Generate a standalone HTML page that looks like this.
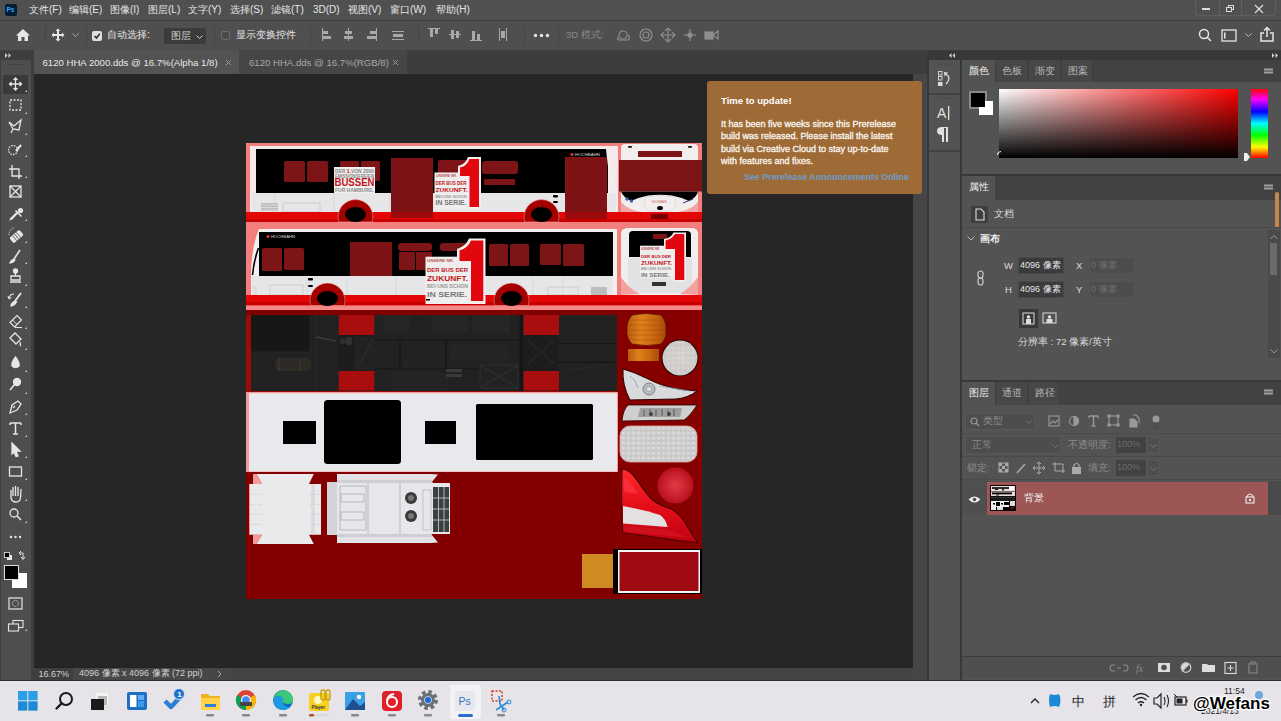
<!DOCTYPE html>
<html><head><meta charset="utf-8">
<style>
*{margin:0;padding:0;box-sizing:border-box}
html,body{width:1281px;height:721px;overflow:hidden;background:#262626;font-family:"Liberation Sans",sans-serif;position:relative}
.a{position:absolute}
.t{position:absolute;white-space:nowrap;line-height:1}
</style></head><body>
<!-- menu bar -->
<div class="a" style="left:0;top:0;width:1281px;height:20px;background:#505050"></div>
<div class="a" style="left:0;top:20px;width:1281px;height:1px;background:#3d3d3d"></div>
<!-- options bar -->
<div class="a" style="left:0;top:21px;width:1281px;height:29px;background:#4f4f4f"></div>
<!-- toolbar -->
<div class="a" style="left:0;top:50px;width:34px;height:631px;background:#3e3e3e"></div>
<div class="a" style="left:1px;top:60px;width:30px;height:621px;background:#4e4e4e"></div>
<!-- doc tab bar -->
<div class="a" style="left:34px;top:50px;width:893px;height:24px;background:#3d3d3d"></div>
<div class="a" style="left:34px;top:50px;width:205px;height:24px;background:#535353"></div>
<div class="a" style="left:239px;top:50px;width:168px;height:24px;background:#464646"></div>
<!-- doc area -->
<div class="a" style="left:34px;top:74px;width:879px;height:593px;background:#262626"></div>
<div class="a" style="left:913px;top:74px;width:14px;height:607px;background:#464646"></div>
<svg class="a" style="left:246px;top:143px" width="456" height="456" viewBox="246 143 456 456" font-family="Liberation Sans" font-weight="bold">
<defs>
<pattern id="grid" width="6" height="6" patternUnits="userSpaceOnUse"><rect width="6" height="6" fill="#242424"/><path d="M0 0H6M0 0V6" stroke="#1c1c1c" stroke-width="0.6"/></pattern>
<linearGradient id="orng" x1="0" x2="1" y1="0" y2="0"><stop offset="0" stop-color="#b85a0c"/><stop offset="0.35" stop-color="#e0801c"/><stop offset="0.7" stop-color="#c8680e"/><stop offset="1" stop-color="#a84c08"/></linearGradient>
<pattern id="noise" width="5" height="5" patternUnits="userSpaceOnUse"><rect width="5" height="5" fill="#d2d0d0"/><rect x="0.3" y="0.6" width="1.2" height="1" fill="#adabab"/><rect x="2.6" y="2.4" width="1.4" height="1.2" fill="#e8e8e8"/><rect x="3.2" y="0.2" width="1" height="1" fill="#b8b6b6"/><rect x="1" y="3.6" width="1" height="1" fill="#bdbbbb"/></pattern>
<radialGradient id="wcirc"><stop offset="0" stop-color="#dcdad7"/><stop offset="1" stop-color="#cbc8c4"/></radialGradient>
<radialGradient id="rcirc"><stop offset="0" stop-color="#e23a45"/><stop offset="1" stop-color="#b8101d"/></radialGradient>
<linearGradient id="tail" x1="0" x2="0" y1="0" y2="1"><stop offset="0" stop-color="#ff2a30"/><stop offset="0.45" stop-color="#e8101a"/><stop offset="1" stop-color="#c00010"/></linearGradient>
<linearGradient id="silver" x1="0" x2="0" y1="0" y2="1"><stop offset="0" stop-color="#e0e0e0"/><stop offset="0.5" stop-color="#8c8c8c"/><stop offset="1" stop-color="#d8d8d8"/></linearGradient>
</defs>
<!-- ===== BUS 1 section ===== -->
<rect x="246" y="143" width="456" height="87" fill="#f27e7e"/>
<rect x="250" y="146" width="368" height="67" fill="#f7e9e9"/>
<rect x="256" y="149" width="352" height="44" fill="#000"/>
<path d="M608 149 Q612 170 616 193 L612 193 Q608 172 606 149Z" fill="#f1eeee"/>
<rect x="252" y="193" width="364" height="19" fill="#e6e5e8"/>
<line x1="275" y1="193" x2="275" y2="212" stroke="#c8c8c8" stroke-width="0.5"/>
<line x1="334" y1="193" x2="334" y2="212" stroke="#c8c8c8" stroke-width="0.5"/>
<line x1="390" y1="193" x2="390" y2="212" stroke="#c8c8c8" stroke-width="0.5"/>
<rect x="261" y="203" width="17" height="8" fill="#bdbdbd"/>
<path d="M261 205H278M261 207.5H278M261 210H278" stroke="#e5e5e5" stroke-width="0.7"/>
<rect x="283" y="203" width="37" height="9" fill="none" stroke="#c8c8c8" stroke-width="0.8"/>
<!-- windows bus1 -->
<rect x="284" y="161" width="21" height="21" rx="1.5" fill="#7d1416"/>
<rect x="307" y="161" width="21" height="21" rx="1.5" fill="#7d1416"/>
<rect x="340" y="161" width="19" height="20" rx="1.5" fill="#7d1416"/>
<rect x="361" y="161" width="19" height="20" rx="1.5" fill="#7d1416"/>
<rect x="438" y="160" width="34" height="16" rx="2" fill="#7d1416"/>
<rect x="482" y="161" width="36" height="13" rx="3" fill="#7d1416"/>
<rect x="484" y="179" width="31" height="6" fill="#7d1416"/>
<!-- door bus1 -->
<rect x="391" y="158" width="42" height="60" fill="#7f1214"/>
<rect x="565" y="157" width="42" height="62" fill="#7f1214"/>
<!-- red band bus1 -->
<rect x="246" y="212" width="456" height="10" fill="#e30606"/>
<rect x="246" y="219" width="456" height="3" fill="#c80000"/>
<rect x="391" y="212" width="42" height="6" fill="#9d0a0c"/>
<rect x="565" y="212" width="42" height="7" fill="#9d0a0c"/>
<!-- wheels bus1 -->
<path d="M338.7 222 A17.5 17.5 0 1 1 372.3 222 Z" fill="#a50000" stroke="#f3b0b0" stroke-width="0.5"/>
<ellipse cx="355.5" cy="214.5" rx="10.5" ry="7.5" fill="#000"/>
<path d="M524.7 222 A17.5 17.5 0 1 1 558.3 222 Z" fill="#a50000" stroke="#f3b0b0" stroke-width="0.5"/>
<ellipse cx="541.5" cy="214.5" rx="10.5" ry="7.5" fill="#000"/>
<rect x="553" y="195" width="5" height="2.4" rx="1" fill="#000"/>
<rect x="553" y="201" width="5" height="2" rx="1" fill="#000"/>
<!-- signs bus1 -->
<rect x="334" y="167" width="41" height="26" fill="#f0efef"/>
<text x="335" y="172.7" font-size="4.8" fill="#888" textLength="39" lengthAdjust="spacingAndGlyphs">DER <tspan fill="#c00">1.</tspan>VON 2000</text>
<text x="335" y="177.5" font-size="4.5" fill="#888" textLength="39" lengthAdjust="spacingAndGlyphs">EMISSIONSFREIEN</text>
<text x="334.5" y="185.7" font-size="10" fill="#c3141a" textLength="40" lengthAdjust="spacingAndGlyphs">BUSSEN</text>
<text x="335" y="192" font-size="4.8" fill="#888" textLength="39" lengthAdjust="spacingAndGlyphs">FUR HAMBURG.</text>
<rect x="434.5" y="172.5" width="34" height="37" fill="#efeeee"/>
<path d="M458 166 Q466 164 468 157 H481 V209.5 H467 V178 H458 Z" fill="#f6eeee"/>
<path d="M460 167.5 Q467 166 469.5 159 H479 V207 H469.5 V176 H460 Z" fill="#e2060e"/>
<text x="436" y="177" font-size="3.4" fill="#b55">UNSERE NR.</text>
<text x="435.5" y="185" font-size="5.2" fill="#c4141a" textLength="31" lengthAdjust="spacingAndGlyphs">DER BUS DER</text>
<text x="435.5" y="192.3" font-size="6.2" fill="#c4141a" textLength="32" lengthAdjust="spacingAndGlyphs">ZUKUNFT.</text>
<text x="435.5" y="197.5" font-size="4.2" fill="#999" textLength="31" lengthAdjust="spacingAndGlyphs">BEI UNS SCHON</text>
<text x="435.5" y="204.5" font-size="6.4" fill="#777" textLength="31" lengthAdjust="spacingAndGlyphs">IN SERIE.</text>
<circle cx="572" cy="154.5" r="1.6" fill="#e33"/><text x="575" y="156" font-size="4" fill="#ddd" font-weight="normal" textLength="25" lengthAdjust="spacingAndGlyphs">HOCHBAHN</text>
<!-- front bus1 -->
<path d="M621 148 Q621 144 625 144 L694 144 Q698 144 698 148 L698 212 L621 212Z" fill="#f3eeee"/>
<rect x="628" y="146" width="4" height="1.8" rx="0.9" fill="#111"/><rect x="688" y="146" width="4" height="1.8" rx="0.9" fill="#111"/>
<rect x="638" y="151" width="44" height="6" fill="#7d1416"/>
<rect x="619" y="160" width="83" height="31.5" fill="#7d1416"/>
<path d="M621 191.5 H698 Q697 197 689 201 Q680 197 672 195.5 Q660 194 648 195.5 Q640 197 631 201 Q623 197 621 191.5Z" fill="#000"/>
<path d="M621 202 Q628 210 642 212 H621Z M698 202 Q691 210 677 212 H698Z" fill="#f2a3a3"/>
<path d="M645 197 Q660 194 675 197 Q678 205 672 211 H648 Q642 205 645 197Z" fill="none" stroke="#c8c4c4" stroke-width="0.4"/>
<circle cx="627" cy="199" r="1.7" fill="#3a5fb0"/><circle cx="631.5" cy="201" r="1.7" fill="#3a5fb0"/>
<text x="652" y="202.5" font-size="2.6" fill="#c55" font-weight="normal">HOCHBAHN</text>
<path d="M683 203 L693 199" stroke="#2a3f80" stroke-width="1"/>
<ellipse cx="660" cy="208" rx="3" ry="2" fill="#000"/>
<rect x="651" y="214" width="17" height="5" fill="#7a0000"/>
<!-- ===== BUS 2 section ===== -->
<rect x="246" y="229" width="456" height="81" fill="#f27e7e"/>
<path d="M259 229 L617 229 L617 295 L251 295 L251 272 Q252 245 259 229Z" fill="#f5f0f0"/>
<rect x="259" y="232" width="354" height="44" fill="#000"/>
<path d="M258.5 248 Q254 260 252.5 275" stroke="#000" stroke-width="1.6" fill="none"/>
<rect x="252" y="276" width="361" height="19" fill="#e6e5e8"/>
<path d="M252 288 H256 V295" stroke="#bbb" stroke-width="0.5" fill="none"/>
<line x1="307" y1="276" x2="307" y2="295" stroke="#c8c8c8" stroke-width="0.5"/>
<line x1="347" y1="276" x2="347" y2="295" stroke="#c8c8c8" stroke-width="0.5"/>
<line x1="396" y1="276" x2="396" y2="295" stroke="#c8c8c8" stroke-width="0.5"/>
<line x1="533" y1="276" x2="533" y2="295" stroke="#c8c8c8" stroke-width="0.5"/>
<line x1="563" y1="276" x2="563" y2="295" stroke="#c8c8c8" stroke-width="0.5"/>
<rect x="270" y="285" width="33" height="10" fill="none" stroke="#c8c8c8" stroke-width="0.8"/>
<rect x="548" y="287" width="30" height="8" fill="none" stroke="#c8c8c8" stroke-width="0.8"/>
<rect x="591" y="287" width="16" height="8" fill="#bdbdbd"/>
<!-- windows bus2 -->
<rect x="262" y="248" width="20" height="23" rx="1.5" fill="#7d1416"/>
<rect x="284" y="248" width="20" height="22" rx="1.5" fill="#7d1416"/>
<rect x="350" y="242" width="42" height="34" fill="#7f1214"/>
<rect x="398" y="243" width="34" height="8" rx="3" fill="#7d1416"/>
<rect x="399" y="252" width="16" height="18" rx="1" fill="#7d1416"/>
<rect x="416" y="252" width="16" height="18" rx="1" fill="#7d1416"/>
<rect x="440" y="243" width="30" height="8" rx="3" fill="#7d1416"/>
<rect x="489" y="244" width="19" height="22" rx="1.5" fill="#7d1416"/>
<rect x="510" y="244" width="19" height="22" rx="1.5" fill="#7d1416"/>
<rect x="540" y="244" width="21" height="21" rx="1.5" fill="#7d1416"/>
<rect x="563" y="244" width="21" height="22" rx="1.5" fill="#7d1416"/>
<circle cx="268" cy="236.5" r="1.6" fill="#e33"/><text x="271" y="238" font-size="3.6" fill="#ddd" font-weight="normal" textLength="24" lengthAdjust="spacingAndGlyphs">HOCHBAHN</text>
<rect x="308" y="278" width="5" height="2.4" rx="1" fill="#000"/>
<rect x="308" y="285" width="5" height="2" rx="1" fill="#000"/>
<!-- red band bus2 -->
<rect x="246" y="295" width="456" height="10.5" fill="#e30606"/>
<rect x="246" y="302" width="456" height="3.5" fill="#c80000"/>
<rect x="246" y="305.5" width="456" height="4.5" fill="#f38888"/>
<path d="M310.7 305.5 A17.5 17.5 0 1 1 344.3 305.5 Z" fill="#a50000" stroke="#f3b0b0" stroke-width="0.5"/>
<ellipse cx="327.5" cy="298.5" rx="10.5" ry="7.5" fill="#000"/>
<path d="M494.7 305.5 A17.5 17.5 0 1 1 528.3 305.5 Z" fill="#a50000" stroke="#f3b0b0" stroke-width="0.5"/>
<ellipse cx="511.5" cy="298.5" rx="10.5" ry="7.5" fill="#000"/>
<!-- sign bus2 -->
<rect x="425.5" y="256.7" width="46" height="47.3" fill="#efeeee"/>
<path d="M457 249 Q466 246 469 238.5 H485.5 V304 H469 V263 H457 Z" fill="#f6eeee"/>
<path d="M459.5 250.5 Q468 248 471 240.5 H483.3 V301 H471 V261 H459.5 Z" fill="#e2060e"/>
<text x="427" y="262" font-size="4" fill="#b55" textLength="27" lengthAdjust="spacingAndGlyphs">UNSERE NR.</text>
<text x="427" y="272.2" font-size="6" fill="#c4141a" textLength="41" lengthAdjust="spacingAndGlyphs">DER BUS DER</text>
<text x="427" y="281" font-size="7.6" fill="#c4141a" textLength="41" lengthAdjust="spacingAndGlyphs">ZUKUNFT.</text>
<text x="427" y="288" font-size="5" fill="#999" textLength="41" lengthAdjust="spacingAndGlyphs">BEI UNS SCHON</text>
<text x="427" y="296.7" font-size="7.6" fill="#777" textLength="40" lengthAdjust="spacingAndGlyphs">IN SERIE.</text>
<rect x="426" y="299" width="4" height="1.5" fill="#000"/>
<!-- rear bus2 -->
<path d="M621 234 Q621 228 628 228 L692 228 Q698 228 698 234 L698 295 L621 295Z" fill="#f2eeee"/>
<path d="M629 235 Q629 231 633 231 L687 231 Q691 231 691 235 L691 257 L629 257Z" fill="#000"/>
<path d="M628 258 L692 258 L692 283 Q690 292 680 293 L640 293 Q630 292 628 283Z" fill="#e2e1e4"/>
<path d="M621 277 Q628 288 640 294 L621 295Z" fill="#f2a0a0"/>
<path d="M698 277 Q690 288 680 294 L698 295Z" fill="#f2a0a0"/>
<rect x="653" y="234" width="14" height="5" fill="#7d1416"/>
<rect x="640" y="245.7" width="36" height="32.5" fill="#efeeee"/>
<path d="M664 239 Q671 238 673.5 232.5 H686 V281.5 H673.5 V250.5 H664 Z" fill="#f6eeee"/>
<path d="M665.6 240.5 Q672 239 675 234 H684.3 V280 H675 V249 H665.6 Z" fill="#e2060e"/>
<text x="641" y="250" font-size="3" fill="#b55" textLength="19" lengthAdjust="spacingAndGlyphs">UNSERE NR.</text>
<text x="641" y="258" font-size="4.2" fill="#c4141a" textLength="30" lengthAdjust="spacingAndGlyphs">DER BUS DER</text>
<text x="641" y="264.5" font-size="5.2" fill="#c4141a" textLength="31" lengthAdjust="spacingAndGlyphs">ZUKUNFT.</text>
<text x="641" y="269.5" font-size="3.6" fill="#999" textLength="30" lengthAdjust="spacingAndGlyphs">BEI UNS SCHON</text>
<text x="641" y="276.5" font-size="5.2" fill="#777" textLength="29" lengthAdjust="spacingAndGlyphs">IN SERIE.</text>
<rect x="652" y="282" width="14" height="4" fill="#333"/>
<!-- ===== SECTION 3 underbody ===== -->
<rect x="246" y="310" width="372" height="83" fill="#9a0b0b"/>
<rect x="246" y="310" width="372" height="5" fill="#7e0202"/>
<rect x="617" y="310" width="85" height="289" fill="#870000"/>
<rect x="251" y="315" width="366" height="76" fill="#1f1f1f"/>
<rect x="251" y="315" width="366" height="76" fill="url(#grid)" opacity="0.6"/>
<rect x="251" y="315" width="59" height="37" fill="#171717"/>
<path d="M251 352 H310 V315 M316 315 V391 M330 315 V391" stroke="#2c2c2c" stroke-width="0.7" fill="none"/>
<rect x="275" y="358" width="36" height="13" rx="5" fill="#2e2a26"/>
<path d="M279 358 V371 M300 358 V371" stroke="#3c3833" stroke-width="1"/>
<path d="M316 337 L336 341" stroke="#3a3a3a" stroke-width="1.5"/>
<rect x="338.7" y="335" width="35.6" height="36" fill="#1d1d1d"/>
<circle cx="343" cy="341" r="3" fill="#2f2f2f"/><rect x="346" y="337" width="6" height="8" rx="2" fill="#333"/>
<rect x="356" y="338" width="18" height="31" fill="#222" stroke="#2e2e2e" stroke-width="0.6"/>
<path d="M357 368 L373 339" stroke="#333" stroke-width="0.8"/>
<rect x="338.7" y="315" width="35.6" height="20" fill="#a80e0e"/>
<rect x="338.7" y="371" width="35.6" height="19.5" fill="#a80e0e"/>
<path d="M374 340 H519 M374 369 H519 M400 340 V369 M446 340 V369 M559 343.6 H616 M559 362.2 H616" stroke="#151515" stroke-width="1.2" fill="none"/>
<path d="M380 340 L395 323 M404 368 L430 343" stroke="#2e2e2e" stroke-width="0.8"/>
<rect x="384" y="316" width="25" height="15" fill="#262626" stroke="#2e2e2e" stroke-width="0.6"/>
<rect x="432" y="316" width="35" height="15" fill="#262626" stroke="#2e2e2e" stroke-width="0.6"/>
<rect x="473" y="316" width="36" height="15" fill="#262626" stroke="#2e2e2e" stroke-width="0.6"/>
<rect x="452" y="346" width="55" height="14" fill="#242424" stroke="#2e2e2e" stroke-width="0.6"/>
<rect x="392" y="374" width="55" height="16" fill="#242424" stroke="#2e2e2e" stroke-width="0.6"/>
<rect x="446" y="369" width="16" height="3" fill="#3a3a3a"/><rect x="446" y="374" width="16" height="3" fill="#3a3a3a"/>
<rect x="480" y="365" width="38" height="23" fill="#222" stroke="#333" stroke-width="0.8"/>
<path d="M481 366 L517 387 M517 366 L481 387" stroke="#383838" stroke-width="0.8"/>
<rect x="519.5" y="315" width="4" height="76" fill="#151515"/>
<rect x="523.5" y="335" width="35.5" height="36" fill="#1d1d1d"/>
<path d="M528 340 L540 352 L528 364 M554 340 L542 352 L554 364" stroke="#333" stroke-width="0.8" fill="none"/>
<rect x="523.5" y="315" width="35.5" height="20" fill="#a80e0e"/>
<rect x="523.5" y="371" width="35.5" height="19.5" fill="#a80e0e"/>
<path d="M570 370 L612 364" stroke="#333" stroke-width="0.5"/>
<!-- ===== SECTION 4 roof white ===== -->
<rect x="246" y="392" width="372" height="80.5" fill="#f39a9a"/>
<rect x="249" y="393.2" width="368" height="78.3" fill="#e9e8ec"/>
<rect x="283" y="421" width="33" height="23" fill="#000"/>
<rect x="324" y="400" width="77" height="64" rx="3.5" fill="#000"/>
<rect x="425" y="421" width="31" height="23" fill="#000"/>
<rect x="476" y="404" width="117" height="56" rx="1.5" fill="#000"/>
<!-- ===== SECTION 5 dark red ===== -->
<rect x="246" y="472" width="372" height="127" fill="#820000"/>
<path d="M253 474 H256.5 L262 484 H253Z M253 544 H256.5 L262 534.7 H253Z" fill="#f39a9a"/>
<path d="M256.5 474 H313.8 L309 484 H321 V534.7 H309 L313.8 544 H256.5 L262 534.7 H249.3 V484 H262 Z" fill="#eaeaec"/>
<path d="M250 495 Q256 493 262 495 M250 505 Q256 503 262 505 M250 515 Q256 513 262 515 M250 525 Q256 523 262 525 M309 495 Q315 493 321 495 M309 505 Q315 503 321 505 M309 515 Q315 513 321 515 M309 525 Q315 523 321 525" stroke="#cfcfd3" stroke-width="0.6" fill="none"/>
<path d="M313 484 V534.7" stroke="#d2d2d6" stroke-width="4" opacity="0.6"/>
<path d="M337 474 H431 L438 474.5 L431 483 H337Z" fill="#e3e2e6"/><path d="M337 480 H431 L433 483 H337Z" fill="#cfced3"/>
<path d="M337 543 H431 L438 542.5 L431 534 H337Z" fill="#e3e2e6"/><path d="M337 534 H431 L433 537 H337Z" fill="#cfced3"/>
<rect x="327" y="482" width="10" height="53" fill="#d4d3d7"/>
<rect x="337" y="483" width="113" height="51" fill="#e7e6ea"/>
<path d="M340 486 H366 V530 H340Z M368 483 V534 M400 483 V534" stroke="#9a9a9a" stroke-width="0.6" fill="none"/>
<rect x="341" y="494" width="23" height="8" fill="none" stroke="#9a9a9a" stroke-width="0.6"/>
<rect x="341" y="512" width="23" height="8" fill="none" stroke="#9a9a9a" stroke-width="0.6"/>
<circle cx="411" cy="498" r="6" fill="#3a3a3a"/><circle cx="411" cy="498" r="3" fill="#777"/>
<circle cx="411" cy="516" r="6" fill="#3a3a3a"/><circle cx="411" cy="516" r="3" fill="#777"/>
<rect x="423" y="490" width="8" height="40" fill="none" stroke="#aaa" stroke-width="0.6"/>
<rect x="433" y="487" width="16" height="45" fill="#3b3f42"/>
<path d="M433 498 H449 M433 509 H449 M433 520 H449 M438.5 487 V532 M444 487 V532" stroke="#cfcfd2" stroke-width="0.8"/>
<!-- right column lamps -->
<path d="M632 315 Q646.5 312 661 315 Q667 322 666 330 Q667 338 661 344 Q646.5 347 632 344 Q626 338 627 330 Q626 322 632 315Z" fill="url(#orng)" stroke="#3a0000" stroke-width="0.6"/>
<path d="M629 320 H664 M628 325 H665 M628 330 H666 M628 335 H665 M629 340 H664" stroke="#8a3a05" stroke-width="0.6" opacity="0.5"/>
<rect x="628" y="349" width="31" height="12" fill="url(#orng)"/>
<circle cx="680" cy="358" r="18.5" fill="#1a0000"/>
<circle cx="680" cy="358" r="17.5" fill="url(#wcirc)"/><circle cx="680" cy="358" r="17" fill="url(#noise)" opacity="0.45"/>
<path d="M623 369 Q634 372 646 378 Q668 390 697 391 Q688 398 676 399 L630 400 Q622 385 623 369Z" fill="#d8dadb" stroke="#2a0000" stroke-width="1"/>
<circle cx="649" cy="389" r="6" fill="#b8bcbe" stroke="#6a6f72" stroke-width="0.8"/><circle cx="649" cy="389" r="2.6" fill="#e0e2e4" stroke="#777" stroke-width="0.5"/><path d="M630 376 Q636 380 638 388 M660 386 Q672 388 690 391" stroke="#8aa0a8" stroke-width="0.8" fill="none"/>
<path d="M628 405 H697 Q690 416 684 420 L622 421 Q623 410 628 405Z" fill="#cfcfcf" stroke="#2a0000" stroke-width="0.8"/>
<path d="M640 408 H682 L680 417 H638Z" fill="#8a8a8a" opacity="0.7"/><path d="M644 410 V416 M650 409 V416 M656 410 V416 M662 409 V416 M668 410 V416 M674 409 V416" stroke="#555" stroke-width="1"/><circle cx="651" cy="414" r="2" fill="#444"/><circle cx="669" cy="414" r="2" fill="#444"/>
<rect x="620" y="426" width="77" height="36" rx="10" fill="#c8c6c6" stroke="#e8b0b0" stroke-width="0.8"/>
<rect x="621" y="427" width="75" height="34" rx="9" fill="url(#noise)"/>
<path d="M622 468.7 Q630 470 636 478.7 Q645 492 651 498.7 Q660 506 671 508.7 Q680 514 685 522.5 L697.5 542.5 Q680 541 657.5 537.5 L622.5 532.5 Q621 500 622 468.7Z" fill="url(#tail)" stroke="#4a0000" stroke-width="1.2"/>
<path d="M624 478 Q632 482 638 494 L624 492Z" fill="#ff4050" opacity="0.5"/>
<path d="M623 506 Q645 510 660 515 Q666 519 667.5 527 L623 523.5Z" fill="#e4e0e2"/>
<path d="M624 526 L668 530 L690 538 L624 532Z" fill="#d0101c"/>
<circle cx="675.5" cy="485.5" r="18" fill="url(#rcirc)"/>
<rect x="582" y="554" width="31" height="34" fill="#d08a22"/>
<rect x="613" y="549" width="89" height="45" fill="#000"/>
<rect x="618" y="550" width="82" height="43" fill="#f5f5f5"/>
<rect x="619.5" y="552" width="79" height="39" fill="#a00a12"/>
</svg>

<!-- status bar -->
<div class="a" style="left:34px;top:667px;width:879px;height:14px;background:#454545;border-top:1px solid #222"></div>
<!-- dock -->
<div class="a" style="left:927px;top:50px;width:354px;height:631px;background:#383838"></div>
<div class="a" style="left:929px;top:60px;width:31px;height:621px;background:#535353"></div>
<div class="a" style="left:962px;top:60px;width:319px;height:621px;background:#535353"></div>
<!-- ===== MENU BAR CONTENT ===== -->
<div class="a" style="left:5px;top:4px;width:12px;height:12px;background:#001e36;border-radius:2px"></div>
<div class="t" style="left:6.5px;top:6.5px;font-size:6.5px;font-weight:bold;color:#31a8ff">Ps</div>
<div class="t" style="left:29px;top:4.5px;font-size:10px;color:#e6e6e6">文件(F)</div>
<div class="t" style="left:69px;top:4.5px;font-size:10px;color:#e6e6e6">编辑(E)</div>
<div class="t" style="left:110px;top:4.5px;font-size:10px;color:#e6e6e6">图像(I)</div>
<div class="t" style="left:148px;top:4.5px;font-size:10px;color:#e6e6e6">图层(L)</div>
<div class="t" style="left:188px;top:4.5px;font-size:10px;color:#e6e6e6">文字(Y)</div>
<div class="t" style="left:230px;top:4.5px;font-size:10px;color:#e6e6e6">选择(S)</div>
<div class="t" style="left:271px;top:4.5px;font-size:10px;color:#e6e6e6">滤镜(T)</div>
<div class="t" style="left:313px;top:4.5px;font-size:10px;color:#e6e6e6">3D(D)</div>
<div class="t" style="left:348px;top:4.5px;font-size:10px;color:#e6e6e6">视图(V)</div>
<div class="t" style="left:390px;top:4.5px;font-size:10px;color:#e6e6e6">窗口(W)</div>
<div class="t" style="left:436px;top:4.5px;font-size:10px;color:#e6e6e6">帮助(H)</div>
<!-- window controls -->
<div class="a" style="left:1195px;top:0;width:81px;height:16px;border:1px solid #5f5f5f;border-top:none;border-radius:0 0 3px 3px"></div>
<div class="a" style="left:1219px;top:0;width:1px;height:16px;background:#5f5f5f"></div>
<div class="a" style="left:1241px;top:0;width:1px;height:16px;background:#5f5f5f"></div>
<div class="a" style="left:1202px;top:8px;width:8px;height:2px;background:#ddd"></div>
<div class="a" style="left:1228px;top:5px;width:6px;height:5px;border:1px solid #ddd"></div>
<div class="a" style="left:1226px;top:7px;width:6px;height:5px;border:1px solid #ddd;background:#535353"></div>
<svg class="a" style="left:1254px;top:4px" width="10" height="10"><path d="M1 1L9 9M9 1L1 9" stroke="#e0e0e0" stroke-width="1.2"/></svg>
<!-- ===== OPTIONS BAR CONTENT ===== -->
<svg class="a" style="left:15px;top:28px" width="16" height="14" viewBox="0 0 16 14"><path d="M8 1L1 7.5H3V13H6.5V9H9.5V13H13V7.5H15Z" fill="#e6e6e6"/></svg>
<div class="a" style="left:45px;top:27px;width:1px;height:17px;background:#444"></div>
<svg class="a" style="left:51px;top:28px" width="14" height="14" viewBox="0 0 14 14"><path d="M7 0.5L9.5 3H8V6H11V4.5L13.5 7L11 9.5V8H8V11H9.5L7 13.5L4.5 11H6V8H3V9.5L0.5 7L3 4.5V6H6V3H4.5Z" fill="#e6e6e6"/></svg>
<svg class="a" style="left:72px;top:33px" width="7" height="5"><path d="M0.5 0.5L3.5 3.5L6.5 0.5" stroke="#aaa" fill="none"/></svg>
<div class="a" style="left:86px;top:27px;width:1px;height:17px;background:#444"></div>
<div class="a" style="left:92px;top:31px;width:10px;height:10px;background:#e0e0e0;border-radius:2px"></div>
<svg class="a" style="left:93px;top:32px" width="8" height="8"><path d="M1.5 4L3.5 6L6.8 1.8" stroke="#333" stroke-width="1.6" fill="none"/></svg>
<div class="t" style="left:107px;top:30px;font-size:10px;color:#e6e6e6">自动选择:</div>
<div class="a" style="left:164px;top:28px;width:42px;height:16px;background:#3b3b3b;border-radius:2px"></div>
<div class="t" style="left:171px;top:31px;font-size:10px;color:#d0d0d0">图层</div>
<svg class="a" style="left:196px;top:35px" width="7" height="5"><path d="M0.5 0.5L3.5 3.5L6.5 0.5" stroke="#ccc" fill="none"/></svg>
<div class="a" style="left:214px;top:27px;width:1px;height:17px;background:#444"></div>
<div class="a" style="left:221px;top:31px;width:9px;height:9px;border:1px solid #6a6a6a;border-radius:2px;background:#4a4a4a"></div>
<div class="t" style="left:236px;top:30px;font-size:10px;color:#e6e6e6">显示变换控件</div>
<div class="a" style="left:310px;top:27px;width:1px;height:17px;background:#444"></div>
<svg class="a" style="left:320px;top:27px" width="200" height="16" fill="#a9a9a9">
 <rect x="2" y="1" width="1" height="13"/><rect x="3" y="4" width="5" height="3"/><rect x="3" y="9" width="8" height="3"/>
 <rect x="28" y="1" width="1" height="13"/><rect x="25" y="4" width="7" height="3"/><rect x="24" y="9" width="9" height="3"/>
 <rect x="56" y="1" width="1" height="13"/><rect x="50" y="4" width="6" height="3"/><rect x="47" y="9" width="9" height="3"/>
 <rect x="72" y="4" width="12" height="1"/><rect x="73" y="7" width="10" height="3"/><rect x="72" y="12" width="12" height="1"/>
</svg>
<div class="a" style="left:418px;top:27px;width:1px;height:17px;background:#444"></div>
<svg class="a" style="left:426px;top:27px" width="90" height="16" fill="#a9a9a9">
 <rect x="2" y="1" width="12" height="1"/><rect x="4" y="2" width="3" height="8"/><rect x="9" y="2" width="3" height="5"/>
 <rect x="23" y="7" width="12" height="1"/><rect x="25" y="3" width="3" height="9"/><rect x="30" y="4" width="3" height="7"/>
 <rect x="44" y="13" width="12" height="1"/><rect x="46" y="4" width="3" height="9"/><rect x="51" y="7" width="3" height="6"/>
 <rect x="73" y="1" width="1" height="13"/><rect x="80" y="1" width="1" height="13"/><rect x="75" y="4" width="4" height="7"/>
</svg>
<div class="a" style="left:524px;top:27px;width:1px;height:17px;background:#444"></div>
<svg class="a" style="left:533px;top:33px" width="18" height="5" fill="#e6e6e6"><circle cx="2.5" cy="2.5" r="1.7"/><circle cx="8.5" cy="2.5" r="1.7"/><circle cx="14.5" cy="2.5" r="1.7"/></svg>
<div class="a" style="left:558px;top:27px;width:1px;height:17px;background:#444"></div>
<div class="t" style="left:566px;top:30px;font-size:9.5px;color:#8a8a8a">3D 模式:</div>
<svg class="a" style="left:615px;top:26px" width="105" height="18" fill="none" stroke="#8f8f8f" stroke-width="1.2">
 <circle cx="8" cy="9" r="4"/><path d="M3 11 Q1 14 6 14 L13 14 Q16 12 13 9"/>
 <circle cx="31" cy="9" r="6"/><circle cx="31" cy="9" r="3"/>
 <path d="M53 2 V16 M46 9 H60" /><path d="M50 5 L53 2 L56 5 M50 13 L53 16 L56 13 M49 6 L46 9 L49 12 M57 6 L60 9 L57 12"/>
 <path d="M75 3 V15 M69 9 H81"/><circle cx="75" cy="9" r="2" fill="#8f8f8f"/>
 <rect x="90" y="6" width="8" height="7" fill="#8f8f8f"/><path d="M98 9 L103 5 V13 Z"/>
</svg>
<!-- right icons options bar -->
<svg class="a" style="left:1198px;top:28px" width="14" height="14" fill="none" stroke="#e6e6e6" stroke-width="1.5"><circle cx="6" cy="6" r="4.5"/><path d="M9.2 9.2L13 13"/></svg>
<svg class="a" style="left:1221px;top:29px" width="16" height="13" fill="none" stroke="#e6e6e6" stroke-width="1.3"><rect x="1" y="1" width="14" height="11"/><rect x="3" y="3.5" width="1.5" height="6" fill="#e6e6e6" stroke="none"/></svg>
<svg class="a" style="left:1245px;top:33px" width="7" height="5"><path d="M0.5 0.5L3.5 3.5L6.5 0.5" stroke="#bbb" fill="none"/></svg>
<svg class="a" style="left:1259px;top:26px" width="16" height="16" fill="none" stroke="#e6e6e6" stroke-width="1.5"><path d="M5 7H2V15H14V7H11"/><path d="M8 11V1.5M5 4.5L8 1.5L11 4.5"/></svg>
<!-- ===== TAB TEXT ===== -->
<div class="t" style="left:42.5px;top:58px;font-size:9.6px;color:#e8e8e8">6120 HHA 2000.dds @ 16.7%(Alpha 1/8)</div>
<svg class="a" style="left:225px;top:59px" width="7" height="7"><path d="M1 1L6 6M6 1L1 6" stroke="#9a9a9a" stroke-width="1"/></svg>
<div class="t" style="left:249px;top:58px;font-size:9.6px;color:#a8a8a8">6120 HHA.dds @ 16.7%(RGB/8)</div>
<svg class="a" style="left:392px;top:59px" width="7" height="7"><path d="M1 1L6 6M6 1L1 6" stroke="#9a9a9a" stroke-width="1"/></svg>
<!-- ===== STATUS BAR ===== -->
<div class="a" style="left:34px;top:668px;width:39px;height:12px;background:#3e3e3e"></div>
<div class="t" style="left:38.5px;top:669.5px;font-size:9px;color:#cfcfcf">16.67%</div>
<div class="a" style="left:73px;top:668px;width:152px;height:12px;background:#474747"></div>
<div class="t" style="left:79px;top:669px;font-size:9px;color:#cfcfcf">4096 像素 x 4096 像素 (72 ppi)</div>
<svg class="a" style="left:217px;top:670px" width="5" height="8"><path d="M1 1L4 4L1 7" stroke="#aaa" fill="none"/></svg>

<!-- ===== TOOLBAR ===== -->
<svg class="a" style="left:5px;top:53px" width="8" height="5" fill="#cfcfcf"><path d="M0 0L2.5 2.5L0 5Z M3.5 0L6 2.5L3.5 5Z"/></svg>
<svg class="a" style="left:8px;top:63px" width="18" height="3"><path d="M0 1.5H18" stroke="#3a3a3a" stroke-dasharray="1 1"/></svg>
<div class="a" style="left:3px;top:75px;width:25px;height:19px;background:#3a3a3a;border-radius:1px"></div>
<svg class="a" style="left:0;top:70px" width="34" height="580" fill="none" stroke="#e6e6e6" stroke-width="1.3">
 <!-- move y84 -->
 <path d="M15.5 78V90M9.5 84H21.5M13.5 80L15.5 78L17.5 80M13.5 88L15.5 90L17.5 88M11.5 82L9.5 84L11.5 86M19.5 82L21.5 84L19.5 86" transform="translate(0,-70)"/>
 <!-- marquee y106 -->
 <rect x="10" y="30" width="11" height="10" stroke-dasharray="2 1.5"/>
 <!-- lasso y127 -->
 <path d="M9 52 L14 56 L21 50 L19 60 L13 59 Z M13 59 L11 63"/>
 <!-- quick select y149 -->
 <circle cx="13" cy="80" r="4.5" stroke-dasharray="1.5 1.2"/><path d="M16 81 L21 75" stroke-width="2"/>
 <!-- crop y170 -->
 <path d="M12 95V106H22M9 99H19V109"/>
 <!-- frame y192 -->
 <rect x="10" y="116" width="11" height="11"/><path d="M10 116L21 127M21 116L10 127"/>
 <!-- eyedropper y213 -->
 <path d="M10.5 149.5 L17.5 142.5" stroke-width="2.4"/><path d="M15.5 140.5 L21.5 146.5" stroke-width="1.6"/><circle cx="20.5" cy="140.5" r="2.6" fill="#e6e6e6" stroke="none"/><path d="M9.5 150.5 L11 149" stroke-width="1"/>
 <!-- healing y235 -->
 <g transform="rotate(-40 16.5 166.5)"><rect x="10" y="163" width="13" height="7" rx="1.5" fill="#e6e6e6" stroke="none"/><path d="M14 163V170M16.5 163V170M19 163V170" stroke="#4e4e4e" stroke-width="0.8"/></g><path d="M9 165 Q9 159 14 158" stroke-dasharray="1 1" stroke-width="1"/>
 <!-- brush y256 -->
 <path d="M20 180 L14 189" stroke-width="1.6"/><path d="M14 189 Q10 191 10 193 Q13 193 15 190Z" fill="#e6e6e6"/>
 <!-- stamp y278 -->
 <path d="M15.5 200V206M11 206H20V210H11ZM10 212H21" /><circle cx="15.5" cy="201" r="2" fill="#e6e6e6"/>
 <!-- history y300 -->
 <path d="M21 223 L15 231" stroke-width="1.8"/><path d="M15 231 Q11 233 11 236 Q14 236 16.5 232Z" fill="#e6e6e6"/><path d="M9 228 Q10 224 14 224" stroke-width="1.1"/><path d="M8 226 L9 229 L11.5 227.5" stroke-width="1"/>
 <!-- eraser y321 -->
 <path d="M10 252.5 L17 245.5 L21.5 250 L14.5 257Z" stroke-width="1.2"/><path d="M12.5 250 L17 254.5" stroke-width="1"/><path d="M15 257.5H22" stroke-width="1.1"/>
 <!-- bucket y342 -->
 <path d="M10 268 L15 263 L21 269 L16 274Z"/><path d="M20 272 Q21 275 20 276" />
 <!-- blur y364 -->
 <path d="M15.5 287 Q11 293 12 296 Q15.5 299 19 296 Q20 293 15.5 287Z" fill="#e6e6e6"/>
 <!-- dodge y386 -->
 <circle cx="17" cy="312" r="3.5" fill="#e6e6e6"/><path d="M14.5 314.5 L10 320" stroke-width="1.6"/>
 <!-- pen y407 -->
 <path d="M10 343 L12 335 L18 331 L21 334 L17 340 Z M13 338 L15 336"/>
 <!-- type y429 -->
 <path d="M10 353H21M15.5 353V364M13 364H18M10 353V355M21 353V355" stroke-width="1.5"/>
 <!-- path select y450 -->
 <path d="M12 373 L20 381 L16 381 L18 386 L16 386.5 L14 382 L12 384Z" fill="#e6e6e6"/>
 <!-- rect y472 -->
 <rect x="9.5" y="397" width="12" height="9"/>
 <!-- hand y493 -->
 <path d="M11 420 L11 428 Q12 432 16 432 Q20 432 20.5 428 L21 419 M13 426V417M15.5 426V416M18 426V417" stroke-width="1.3"/>
 <!-- zoom y515 -->
 <circle cx="14" cy="443" r="4"/><path d="M17 446 L21 450" stroke-width="1.6"/>
</svg>
<svg class="a" style="left:0;top:0" width="34" height="681" fill="#e6e6e6">
 <circle cx="11" cy="537" r="1.2"/><circle cx="15.5" cy="537" r="1.2"/><circle cx="20" cy="537" r="1.2"/>
 <rect x="7" y="555" width="5" height="5" fill="#e6e6e6"/><rect x="4.5" y="552.5" width="5" height="5" fill="#000" stroke="#e6e6e6" stroke-width="0.8"/>
 <path d="M19 553 H23 V559 M21 557 L23 559.5 L25 557 M21 551 L19 553 L21 555" fill="none" stroke="#e6e6e6" stroke-width="1"/>
 <rect x="12" y="573" width="15" height="15" fill="#fff"/>
 <rect x="4.5" y="565.5" width="14" height="14" fill="#000" stroke="#dcdcdc" stroke-width="1"/>
 <rect x="9" y="598" width="13" height="11" fill="none" stroke="#e6e6e6" stroke-width="1.2"/><circle cx="15.5" cy="603.5" r="3" fill="none" stroke="#e6e6e6" stroke-dasharray="1 1"/>
 <rect x="13" y="620.5" width="10" height="7" fill="none" stroke="#e6e6e6" stroke-width="1.1"/><rect x="8.5" y="624" width="10" height="7" fill="#4e4e4e" stroke="#e6e6e6" stroke-width="1.1"/>
</svg>
<svg class="a" style="left:0;top:0" width="34" height="681" fill="#cfcfcf">
 <path d="M25 92h2v-2z M25 114h2v-2z M25 135h2v-2z M25 157h2v-2z M25 178h2v-2z M25 221h2v-2z M25 243h2v-2z M25 264h2v-2z M25 286h2v-2z M25 308h2v-2z M25 329h2v-2z M25 350h2v-2z M25 372h2v-2z M25 394h2v-2z M25 415h2v-2z M25 437h2v-2z M25 458h2v-2z M25 480h2v-2z M25 501h2v-2z M25 523h2v-2z M25 631h2v-2z"/>
</svg>
<!-- ===== DOCK ICON COLUMN ===== -->
<svg class="a" style="left:949px;top:53px" width="8" height="5" fill="#cfcfcf"><path d="M2.5 0L0 2.5L2.5 5Z M6 0L3.5 2.5L6 5Z"/></svg>
<svg class="a" style="left:1272px;top:53px" width="8" height="5" fill="#cfcfcf"><path d="M0 0L2.5 2.5L0 5Z M3.5 0L6 2.5L3.5 5Z"/></svg>
<div class="a" style="left:929px;top:60px;width:31px;height:33px;background:#535353"></div>
<div class="a" style="left:929px;top:93px;width:31px;height:1.5px;background:#424242"></div><div class="a" style="left:929px;top:150px;width:31px;height:1.5px;background:#424242"></div>
<svg class="a" style="left:929px;top:60px" width="31" height="95">
 <path d="M9 4H22M9 38H22" stroke="#3e3e3e" stroke-dasharray="1 1"/>
 <rect x="9.5" y="11.5" width="3.5" height="3.5" fill="none" stroke="#ddd" stroke-width="0.9"/><rect x="9.5" y="16.5" width="3.5" height="3.5" fill="none" stroke="#ddd" stroke-width="0.9"/><rect x="9" y="22" width="4.5" height="4" fill="#ddd"/>
 <path d="M15 12 L19 12.5 L15.5 16.5Z" fill="#ddd"/><path d="M17 14 Q23 18 17 24" fill="none" stroke="#ddd" stroke-width="1.3"/>
 <text x="8" y="58" font-size="14" fill="#e0e0e0" font-family="Liberation Sans">A</text><rect x="19" y="46" width="1.3" height="14" fill="#ddd"/>
 <path d="M13 67 Q8 67 8 71 Q8 75 13 75 V82 H15 V68 H17 V82 H19 V67Z" fill="#e0e0e0"/>
</svg>
<!-- ===== COLOR PANEL ===== -->
<div class="a" style="left:962px;top:60px;width:319px;height:22px;background:#424242"></div>
<div class="a" style="left:962px;top:60px;width:33px;height:22px;background:#535353"></div>
<div class="a" style="left:995px;top:60px;width:32px;height:22px;background:#474747;border-left:1px solid #3d3d3d"></div>
<div class="a" style="left:1028px;top:60px;width:32px;height:22px;background:#474747;border-left:1px solid #3d3d3d"></div>
<div class="a" style="left:1061px;top:60px;width:32px;height:22px;background:#474747;border-left:1px solid #3d3d3d;border-right:1px solid #3d3d3d"></div>
<div class="t" style="left:969px;top:66px;font-size:9.5px;color:#f0f0f0">颜色</div>
<div class="t" style="left:1002px;top:66px;font-size:9.5px;color:#b8b8b8">色板</div>
<div class="t" style="left:1035px;top:66px;font-size:9.5px;color:#b8b8b8">渐变</div>
<div class="t" style="left:1068px;top:66px;font-size:9.5px;color:#b8b8b8">图案</div>
<svg class="a" style="left:1264px;top:68px" width="9" height="6" fill="#a0a0a0"><rect y="0.5" width="9" height="2"/><rect y="3.5" width="9" height="2"/></svg>
<div class="a" style="left:969px;top:91px;width:18px;height:18px;background:#888"></div>
<div class="a" style="left:979px;top:101px;width:14px;height:14px;background:#fff"></div>
<div class="a" style="left:971px;top:93px;width:14px;height:14px;background:#000"></div>
<div class="a" style="left:999px;top:89px;width:239px;height:69px;background:linear-gradient(to bottom,rgba(0,0,0,0),#000),linear-gradient(to right,#fff,#f00)"></div>
<div class="a" style="left:997px;top:151px;width:8px;height:8px;border:1px solid #fff;border-radius:50%;clip-path:inset(0 50% 50% 0)"></div>
<div class="a" style="left:1251px;top:89px;width:17px;height:69px;background:linear-gradient(to bottom,#f00,#f0f 15%,#00f 33%,#0ff 50%,#0f0 67%,#ff0 84%,#f00)"></div>
<svg class="a" style="left:1244px;top:153px" width="6" height="8"><path d="M0 0H3L6 4L3 8H0Z" fill="#eee"/></svg>
<!-- ===== PROPERTIES PANEL ===== -->
<div class="a" style="left:962px;top:174px;width:319px;height:2px;background:#383838"></div>
<div class="a" style="left:962px;top:176px;width:319px;height:24px;background:#424242"></div>
<div class="a" style="left:962px;top:176px;width:33px;height:24px;background:#535353"></div>
<div class="t" style="left:969px;top:182px;font-size:9.5px;color:#f0f0f0">属性</div>
<svg class="a" style="left:1264px;top:184px" width="9" height="6" fill="#a0a0a0"><rect y="0.5" width="9" height="2"/><rect y="3.5" width="9" height="2"/></svg>
<div class="a" style="left:1275px;top:192px;width:4px;height:36px;background:#c8874a;border-radius:2px"></div>
<div class="a" style="left:971px;top:206px;width:17px;height:17px;background:#3e3e3e"></div>
<svg class="a" style="left:975px;top:208px" width="10" height="13"><path d="M1 1H6L9 4V12H1Z" fill="none" stroke="#ddd" stroke-width="1.1"/></svg>
<div class="t" style="left:994px;top:209px;font-size:9.5px;color:#dcdcdc">文档</div>
<div class="a" style="left:962px;top:227px;width:319px;height:1px;background:#494949"></div>
<svg class="a" style="left:967px;top:236px" width="8" height="5"><path d="M0.5 0.5L4 4L7.5 0.5" stroke="#bbb" fill="none"/></svg>
<div class="t" style="left:980px;top:234px;font-size:9.5px;font-weight:bold;color:#f0f0f0">画布</div>
<div class="t" style="left:1004px;top:261px;font-size:9.5px;color:#dcdcdc">W</div>
<div class="a" style="left:1018px;top:257px;width:46px;height:17px;background:#3b3b3b;border:1px solid #4a4a4a"></div>
<div class="t" style="left:1020px;top:261px;font-size:9px;color:#e6e6e6">4096 像素</div>
<div class="t" style="left:1076px;top:261px;font-size:9.5px;color:#dcdcdc">X</div>
<div class="a" style="left:1089px;top:257px;width:46px;height:17px;background:#4d4d4d;border:1px solid #555"></div>
<div class="t" style="left:1091px;top:261px;font-size:9px;color:#6e6e6e">0 像素</div>
<div class="t" style="left:1005px;top:285px;font-size:9.5px;color:#dcdcdc">H</div>
<div class="a" style="left:1018px;top:281px;width:46px;height:17px;background:#3b3b3b;border:1px solid #4a4a4a"></div>
<div class="t" style="left:1020px;top:285px;font-size:9px;color:#e6e6e6">4096 像素</div>
<div class="t" style="left:1076px;top:285px;font-size:9.5px;color:#dcdcdc">Y</div>
<div class="a" style="left:1089px;top:281px;width:46px;height:17px;background:#4d4d4d;border:1px solid #555"></div>
<div class="t" style="left:1091px;top:285px;font-size:9px;color:#6e6e6e">0 像素</div>
<svg class="a" style="left:976px;top:270px" width="10" height="16" fill="none" stroke="#ccc" stroke-width="1.2"><rect x="2" y="1" width="5" height="7" rx="2.5"/><rect x="2" y="8" width="5" height="7" rx="2.5"/></svg>
<div class="a" style="left:1019px;top:309px;width:19px;height:19px;background:#383838"></div>
<svg class="a" style="left:1022px;top:312px" width="13" height="13"><rect x="1" y="1" width="11" height="11" fill="none" stroke="#ddd"/><circle cx="6.5" cy="5" r="1.8" fill="#ddd"/><rect x="4" y="7" width="5" height="5" fill="#ddd"/></svg>
<svg class="a" style="left:1042px;top:312px" width="15" height="13"><rect x="1" y="1" width="13" height="10" fill="none" stroke="#ddd"/><circle cx="7.5" cy="5" r="1.8" fill="#ddd"/><rect x="4.5" y="7" width="6" height="4" fill="#ddd"/></svg>
<div class="t" style="left:1018px;top:337px;font-size:9.5px;color:#dcdcdc">分辨率 : 72 像素/英寸</div>
<div class="a" style="left:1268px;top:230px;width:12px;height:128px;background:#4a4a4a"></div>
<div class="a" style="left:1270px;top:243px;width:7px;height:32px;background:#6a6a6a"></div>
<svg class="a" style="left:1270px;top:235px" width="8" height="5"><path d="M0.5 4L4 0.5L7.5 4" stroke="#999" fill="none"/></svg>
<svg class="a" style="left:1270px;top:349px" width="8" height="5"><path d="M0.5 0.5L4 4L7.5 0.5" stroke="#999" fill="none"/></svg>
<!-- ===== LAYERS PANEL ===== -->
<div class="a" style="left:962px;top:380px;width:319px;height:2px;background:#383838"></div>
<div class="a" style="left:962px;top:382px;width:319px;height:23px;background:#424242"></div>
<div class="a" style="left:962px;top:382px;width:33px;height:23px;background:#535353"></div>
<div class="a" style="left:995px;top:382px;width:32px;height:23px;background:#474747;border-left:1px solid #3d3d3d"></div>
<div class="a" style="left:1028px;top:382px;width:32px;height:23px;background:#474747;border-left:1px solid #3d3d3d;border-right:1px solid #3d3d3d"></div>
<div class="t" style="left:969px;top:388px;font-size:9.5px;color:#f0f0f0">图层</div>
<div class="t" style="left:1002px;top:388px;font-size:9.5px;color:#b8b8b8">通道</div>
<div class="t" style="left:1035px;top:388px;font-size:9.5px;color:#b8b8b8">路径</div>
<svg class="a" style="left:1264px;top:389px" width="9" height="6" fill="#a0a0a0"><rect y="0.5" width="9" height="2"/><rect y="3.5" width="9" height="2"/></svg>
<div class="a" style="left:965px;top:413px;width:70px;height:17px;background:#4d4d4d;border:1px solid #575757"></div>
<svg class="a" style="left:970px;top:417px" width="10" height="10" fill="none" stroke="#9a9a9a" stroke-width="1.2"><circle cx="4" cy="4" r="3"/><path d="M6 6L9 9"/></svg>
<div class="t" style="left:983px;top:416px;font-size:9.5px;color:#8c8c8c">类型</div>
<svg class="a" style="left:1025px;top:420px" width="7" height="5"><path d="M0.5 0.5L3.5 3.5L6.5 0.5" stroke="#777" fill="none"/></svg>
<svg class="a" style="left:1045px;top:412px" width="120" height="20" fill="none" stroke="#999" stroke-width="1.1">
 <rect x="4" y="4" width="10" height="10"/><path d="M5 12L8 9L10 11L13 8" />
 <circle cx="29" cy="9" r="4.5"/><path d="M29 4.5A4.5 4.5 0 0 1 29 13.5Z" fill="#999"/>
 <path d="M44 4H53M48.5 4V14M46.5 14H50.5M44 4V6M53 4V6" stroke-width="1.4"/>
 <rect x="64" y="4" width="9" height="9"/><rect x="63" y="3" width="2" height="2" fill="#999"/><rect x="72" y="3" width="2" height="2" fill="#999"/><rect x="63" y="12" width="2" height="2" fill="#999"/><rect x="72" y="12" width="2" height="2" fill="#999"/>
 <path d="M85 7H89L92 10V15H85Z" fill="#999"/><path d="M88 3H91L94 6V11"/>
 <circle cx="111" cy="7" r="3.5" fill="#999" stroke="none"/><rect x="108" y="11" width="6" height="7" rx="3" fill="#4d4d4d" stroke="none"/>
</svg>
<div class="a" style="left:962px;top:433px;width:319px;height:1px;background:#4a4a4a"></div>
<div class="a" style="left:965px;top:436px;width:96px;height:18px;background:#4d4d4d;border:1px solid #575757"></div>
<div class="t" style="left:972px;top:440px;font-size:9.5px;color:#8c8c8c">正常</div>
<svg class="a" style="left:1052px;top:444px" width="7" height="5"><path d="M0.5 0.5L3.5 3.5L6.5 0.5" stroke="#777" fill="none"/></svg>
<div class="t" style="left:1068px;top:440px;font-size:9.5px;color:#8c8c8c">不透明度:</div>
<div class="a" style="left:1116px;top:437px;width:30px;height:16px;background:#424242"></div>
<div class="t" style="left:1117px;top:440px;font-size:9px;color:#6c6c6c">100%</div>
<div class="a" style="left:1147px;top:437px;width:12px;height:16px;background:#4d4d4d;border:1px solid #575757"></div><svg class="a" style="left:1150px;top:444px" width="7" height="5"><path d="M0.5 0.5L3.5 3.5L6.5 0.5" stroke="#777" fill="none"/></svg>
<div class="a" style="left:962px;top:456px;width:319px;height:1px;background:#4a4a4a"></div>
<div class="t" style="left:967px;top:463px;font-size:9.5px;color:#8c8c8c">锁定:</div>
<svg class="a" style="left:995px;top:459px" width="90" height="18">
 <rect x="4" y="4" width="9" height="9" fill="none" stroke="#aaa"/><rect x="4" y="4" width="3" height="3" fill="#aaa"/><rect x="10" y="4" width="3" height="3" fill="#aaa"/><rect x="7" y="7" width="3" height="3" fill="#aaa"/><rect x="4" y="10" width="3" height="3" fill="#aaa"/><rect x="10" y="10" width="3" height="3" fill="#aaa"/>
 <path d="M22 14 L30 5" stroke="#aaa" stroke-width="1.6"/>
 <path d="M44 3V15M38 9H50M42 5L44 3L46 5M42 13L44 15L46 13M40 7L38 9L40 11M48 7L50 9L48 11" stroke="#aaa" fill="none"/>
 <path d="M57 5H68V14M60 3V12H70" stroke="#aaa" fill="none"/>
 <rect x="77" y="8" width="9" height="7" fill="#aaa"/><path d="M79 8V6Q81.5 3 84 6V8" stroke="#aaa" fill="none" stroke-width="1.2"/>
</svg>
<div class="t" style="left:1088px;top:463px;font-size:9.5px;color:#8c8c8c">填充:</div>
<div class="a" style="left:1116px;top:460px;width:30px;height:16px;background:#424242"></div>
<div class="t" style="left:1117px;top:463px;font-size:9px;color:#6c6c6c">100%</div>
<div class="a" style="left:1147px;top:460px;width:12px;height:16px;background:#4d4d4d;border:1px solid #575757"></div><svg class="a" style="left:1150px;top:467px" width="7" height="5"><path d="M0.5 0.5L3.5 3.5L6.5 0.5" stroke="#777" fill="none"/></svg>
<div class="a" style="left:962px;top:479px;width:319px;height:1px;background:#4a4a4a"></div>
<div class="a" style="left:962px;top:481px;width:25px;height:34px;background:#4f4f4f"></div>
<div class="a" style="left:987px;top:482px;width:281px;height:33px;background:#9c5656"></div>
<div class="a" style="left:1268px;top:481px;width:13px;height:34px;background:#4a4a4a"></div>
<svg class="a" style="left:968px;top:495px" width="13" height="9"><path d="M0.5 4.5Q6.5 -1.5 12.5 4.5Q6.5 10.5 0.5 4.5Z" fill="#eee"/><circle cx="6.5" cy="4.5" r="1.8" fill="#4f4f4f"/></svg>
<div class="a" style="left:990px;top:485px;width:26px;height:26px;background:#000"></div>
<svg class="a" style="left:990px;top:485px" width="26" height="26">
 <rect x="0" y="0" width="26" height="26" fill="#100"/>
 <rect x="1" y="1" width="24" height="5" fill="#f0dede"/><rect x="2" y="2.2" width="19" height="1.6" fill="#000"/><rect x="5" y="4" width="3" height="1" fill="#111"/><rect x="12" y="4" width="2" height="1.5" fill="#222"/><rect x="19" y="1" width="5" height="4" fill="#fff"/>
 <rect x="1" y="6.5" width="24" height="4.5" fill="#eadada"/><rect x="2" y="7.5" width="20" height="1.8" fill="#000"/><rect x="6" y="9.5" width="3" height="1" fill="#222"/>
 <rect x="1" y="11.5" width="24" height="4.5" fill="#1a1a1a"/><rect x="1" y="12" width="24" height="1" fill="#333"/>
 <rect x="1" y="16" width="18" height="6" fill="#f2f2f2"/><rect x="3" y="18" width="2" height="1.5" fill="#000"/><rect x="6" y="17" width="4" height="4" fill="#000"/><rect x="11" y="18" width="2" height="1.5" fill="#000"/><rect x="14" y="17" width="5" height="3" fill="#000"/>
 <rect x="1" y="22" width="5" height="3" fill="#eee"/><rect x="7" y="22" width="6" height="3" fill="#ddd"/>
 <rect x="20" y="16" width="5" height="5" fill="#ddd"/><path d="M21 23 Q23 24 24 22" stroke="#c44" fill="none" stroke-width="0.8"/>
</svg>
<div class="t" style="left:1024px;top:493px;font-size:10px;color:#f0f0f0">背景</div>
<svg class="a" style="left:1245px;top:492px" width="10" height="12" fill="none" stroke="#eee" stroke-width="1.1"><rect x="1" y="5" width="8" height="6"/><path d="M2.5 5V3.5Q5 0.5 7.5 3.5V5"/><rect x="4" y="7" width="2" height="2" fill="#eee" stroke="none"/></svg>
<div class="a" style="left:962px;top:656px;width:319px;height:1px;background:#3d3d3d"></div>
<div class="a" style="left:962px;top:657px;width:319px;height:21px;background:#4f4f4f"></div>
<svg class="a" style="left:1105px;top:659px" width="170" height="18" fill="none" stroke="#b5b5b5" stroke-width="1.1">
 <path d="M12 9H16M10 6H8Q5 6 5 9Q5 12 8 12H10M18 6H20Q23 6 23 9Q23 12 20 12H18" stroke="#8a8a8a"/>
 <text x="31" y="13" font-size="10" font-style="italic" fill="#8a8a8a" stroke="none" font-family="Liberation Serif">fx</text>
 <rect x="53" y="4" width="12" height="9" fill="#ddd" stroke="none"/><circle cx="59" cy="8.5" r="2.8" fill="#4f4f4f" stroke="none"/>
 <circle cx="81" cy="8.5" r="4.8" stroke="#ddd"/><path d="M81 3.7A4.8 4.8 0 0 0 81 13.3Z" fill="#ddd" transform="rotate(45 81 8.5)"/>
 <path d="M97 5H102L103 6H110V13H97Z" fill="#ddd" stroke="none"/>
 <rect x="120" y="3.5" width="11" height="11" stroke="#ddd"/><path d="M125.5 6V12M122.5 9H128.5" stroke="#ddd"/>
 <path d="M143 5H153M146 5V3H150V5M144 6V14H152V6" stroke="#8a8a8a"/>
</svg>

<!-- taskbar -->
<div class="a" style="left:0;top:680px;width:1281px;height:1px;background:#2c2c2c"></div>
<div class="a" style="left:0;top:681px;width:1281px;height:40px;background:#e6e4e8"></div>
<!-- ===== NOTIFICATION ===== -->
<div class="a" style="left:707px;top:81px;width:215px;height:113px;background:#9e6b37;border-radius:3px"></div>
<div class="t" style="left:721px;top:96px;font-size:9.5px;font-weight:bold;color:#fff">Time to update!</div>
<div class="a" style="left:721px;top:118px;width:200px;font-size:9px;line-height:12.4px;color:#fbf6ef;white-space:nowrap;-webkit-text-stroke:0.3px #fbf6ef">It has been five weeks since this Prerelease<br>build was released. Please install the latest<br>build via Creative Cloud to stay up-to-date<br>with features and fixes.</div>
<div class="t" style="left:744px;top:173px;font-size:8.9px;font-weight:bold;color:#6e9ccc">See Prerelease Announcements Online</div>
<!-- ===== TASKBAR ICONS ===== -->
<svg class="a" style="left:0;top:681px" width="540" height="40">
 <!-- windows -->
 <g transform="translate(18,10)"><rect x="0" y="0" width="9.3" height="9.3" fill="#2d9ee8"/><rect x="10.3" y="0" width="9.3" height="9.3" fill="#2d9ee8"/><rect x="0" y="10.3" width="9.3" height="9.3" fill="#1d8ad8"/><rect x="10.3" y="10.3" width="9.3" height="9.3" fill="#1d8ad8"/></g>
 <!-- search -->
 <g transform="translate(55,11)"><circle cx="11" cy="7" r="6" fill="none" stroke="#1a1a1a" stroke-width="2"/><path d="M6.5 11.5 L1.5 16.5" stroke="#1a1a1a" stroke-width="2.4" stroke-linecap="round"/></g>
 <!-- task view -->
 <g transform="translate(90,10)"><rect x="5" y="1" width="14" height="14" fill="#f4f4f4" stroke="#ddd"/><rect x="8" y="5" width="9" height="9" fill="#b7b7b7"/><rect x="1" y="8" width="13" height="11" fill="#1a1a1a"/></g>
 <!-- widgets -->
 <g transform="translate(127,10)"><rect x="0" y="1" width="20" height="18" rx="2" fill="#1e6fc4"/><rect x="3" y="4" width="6.5" height="12" fill="#fff"/><rect x="11" y="4" width="6" height="5" fill="#5fb0f0"/><rect x="11" y="10" width="6" height="6" fill="#3a9ae8"/></g>
 <!-- todo -->
 <g transform="translate(164,8)"><path d="M1 12 L7 18 L19 5" fill="none" stroke="#2a7fd6" stroke-width="4.5" stroke-linejoin="round"/><circle cx="15" cy="5" r="5.5" fill="#1f73d0" stroke="#e5e4ea" stroke-width="1"/><text x="13.3" y="8.2" font-size="8" fill="#fff" font-family="Liberation Sans" font-weight="bold">1</text></g>
 <!-- explorer -->
 <g transform="translate(200,10)"><path d="M1 3 H8 L10 5 H20 V19 H1Z" fill="#f0b420"/><rect x="1" y="7" width="19" height="12" fill="#ffd24a"/><rect x="5" y="13" width="11" height="3" fill="#2b7fd4"/></g>
 <rect x="206" y="33" width="8" height="2.5" rx="1" fill="#8a8a8a"/>
 <!-- chrome -->
 <g transform="translate(236,9)"><circle cx="10" cy="10" r="10" fill="#db4437"/><path d="M10 10 L1.3 5 A10 10 0 0 0 10 20Z" fill="#0f9d58"/><path d="M10 10 L10 20 A10 10 0 0 0 18.7 5Z" fill="#f4b400"/><circle cx="10" cy="10" r="5" fill="#fff"/><circle cx="10" cy="10" r="3.8" fill="#4285f4"/><rect x="4" y="12" width="12" height="4" fill="#444" rx="1"/></g>
 <rect x="242" y="33" width="8" height="2.5" rx="1" fill="#8a8a8a"/>
 <!-- edge -->
 <g transform="translate(273,9)"><circle cx="10" cy="10" r="10" fill="#0c6cc0"/><path d="M0.5 11 Q1 1 10 0.3 Q19 0.5 20 10 Q20 14 15 14 Q9 14 9 10 Q9 6 4 6 Q1 7 0.5 11Z" fill="#38c878"/><path d="M0.5 11 Q2 5 7 6 Q11 7 10 12 Q10 17 16 17 Q18 17 19 15 Q16 20 10 20 Q1 19.5 0.5 11Z" fill="#1e9ae0"/></g>
 <rect x="279" y="33" width="8" height="2.5" rx="1" fill="#8a8a8a"/>
 <!-- player -->
 <g transform="translate(309,10)"><rect x="0" y="2" width="20" height="18" rx="2" fill="#f5d020"/><circle cx="9" cy="9" r="4" fill="#fff8c0"/><text x="2.5" y="17.5" font-size="4.5" fill="#333" font-family="Liberation Sans" font-weight="bold">Player</text><rect x="12" y="-1" width="4" height="10" rx="2" fill="none" stroke="#c8a010" stroke-width="1.4"/><rect x="17" y="-1" width="4" height="10" rx="2" fill="none" stroke="#c8a010" stroke-width="1.4"/></g>
 <rect x="309" y="33" width="20" height="2.5" rx="1" fill="#d8d8d8"/><rect x="309" y="33" width="5" height="2.5" rx="1" fill="#b0502a"/>
 <!-- photos -->
 <g transform="translate(345,10)"><rect x="0" y="1" width="20" height="18" rx="1" fill="#3aa0e8"/><path d="M0 19 L8 8 L15 15 L20 11 V19Z" fill="#1f4f90"/><circle cx="14" cy="6" r="2.2" fill="#fff"/></g>
 <rect x="351" y="33" width="8" height="2.5" rx="1" fill="#8a8a8a"/>
 <!-- netease -->
 <g transform="translate(382,10)"><rect x="0" y="0" width="20" height="20" rx="4" fill="#e0202a"/><circle cx="10" cy="11" r="5" fill="none" stroke="#fff" stroke-width="2"/><path d="M12 3 Q6 4 5 9" stroke="#fff" stroke-width="2" fill="none"/></g>
 <rect x="388" y="33" width="8" height="2.5" rx="1" fill="#8a8a8a"/>
 <!-- settings -->
 <g transform="translate(418,9)"><circle cx="10" cy="10" r="8.2" fill="none" stroke="#6a7078" stroke-width="3.6" stroke-dasharray="3.6 2.84"/><circle cx="10" cy="10" r="7" fill="#6a7078"/><circle cx="10" cy="10" r="3.6" fill="#1a6ad0" stroke="#dfe3ea" stroke-width="0.8"/></g>
 <rect x="424" y="33" width="8" height="2.5" rx="1" fill="#8a8a8a"/>
 <!-- PS active -->
 <rect x="450" y="4" width="31" height="34" rx="3" fill="#f3f3f6"/>
 <g transform="translate(455,10)"><rect x="0" y="0" width="20" height="20" rx="2" fill="#e6e8ee"/><text x="3.5" y="14" font-size="10.5" fill="#3b6fc0" font-family="Liberation Sans">Ps</text></g>
 <rect x="458" y="33" width="15" height="3" rx="1.5" fill="#2a6fd0"/>
 <!-- snipping -->
 <g transform="translate(491,9)"><rect x="1" y="1" width="10" height="10" fill="none" stroke="#d04020" stroke-width="1.5" stroke-dasharray="2 1.5"/><path d="M8 6 L9 14 L13 20 M17 12 L11 16 L5 20" stroke="#2a8ad0" stroke-width="1.6" fill="none"/><circle cx="13" cy="20" r="2" fill="none" stroke="#2a8ad0"/><circle cx="18" cy="12" r="2" fill="none" stroke="#2a8ad0"/></g>
 <rect x="497" y="33" width="8" height="2.5" rx="1" fill="#8a8a8a"/>
</svg>
<svg class="a" style="left:1020px;top:681px" width="261" height="40">
 <path d="M11 22 L15 18 L19 22" stroke="#222" stroke-width="1.3" fill="none"/>
 <path d="M30 13 Q35 15 39 13 Q42 19 39 26 Q35 24 30 26 Q28 19 30 13Z" fill="#1a88d8"/>
 <text x="52" y="25" font-size="13" fill="#222" font-family="Liberation Sans">中</text>
 <text x="83" y="25" font-size="13" fill="#222" font-family="Liberation Sans">拼</text>
 <g fill="none" stroke="#222" stroke-width="1.3"><path d="M113 16 Q121 9 129 16"/><path d="M115.5 19 Q121 14 126.5 19"/><path d="M118 22 Q121 19.5 124 22"/></g><circle cx="121" cy="24" r="1.2" fill="#222"/>
 <path d="M134 17 H137 L141 13 V27 L137 23 H134Z" fill="none" stroke="#222" stroke-width="1.2"/><path d="M144 16 Q146 20 144 24 M147 14 Q150 20 147 26" fill="none" stroke="#222" stroke-width="1.1"/>
 <rect x="155" y="16" width="11" height="8" fill="none" stroke="#222" stroke-width="1.2"/><rect x="156.5" y="17.5" width="6" height="5" fill="#222"/><rect x="166" y="18.5" width="1.5" height="3" fill="#222"/><path d="M154 13 L157 16" stroke="#222"/>
 <text x="1224" y="13" font-size="8.5" fill="#222" font-family="Liberation Sans" transform="translate(-1020,0)">11:54</text>
 <text x="1201" y="33" font-size="8.5" fill="#222" font-family="Liberation Sans" transform="translate(-1020,0)">2021/4/13</text>
 <text x="173" y="28" font-size="17" font-weight="bold" fill="#000" stroke="#fff" stroke-width="2.5" paint-order="stroke" font-family="Liberation Sans" textLength="77" lengthAdjust="spacingAndGlyphs">@Wefans</text>
 <circle cx="239" cy="14" r="4" fill="#3a8ad8" opacity="0.7"/>
</svg>

</body></html>
